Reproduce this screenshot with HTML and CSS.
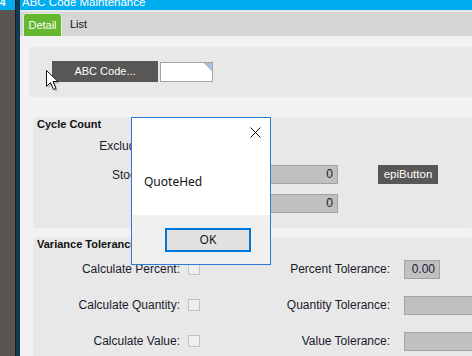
FILE: index.html
```html
<!DOCTYPE html>
<html lang="en">
<head>
    <meta charset="UTF-8">
    <title>ABC Code Maintenance</title>
    <link rel="stylesheet" href="styles.css">
</head>
<body>
    <div class="desk">
        <div class="side">
            <div class="side-top">4</div>
        </div>
        <div class="edge"></div>
        <div class="window">
            <div class="titlebar"><span class="title">ABC Code Maintenance</span></div>
            <div class="tabs">
                <div class="tab active">Detail</div>
                <div class="tab">List</div>
            </div>
            <div class="content">
                <div class="panel key-panel">
                    <div class="epi-btn key-btn">ABC Code...</div>
                    <div class="key-input"></div>
                </div>

                <div class="panel group cycle">
                    <div class="group-title">Cycle Count</div>
                    <div class="row">
                        <span class="lbl">Exclude Inactives:</span>
                        <span class="check"></span>
                    </div>
                    <div class="row">
                        <span class="lbl">Stock Turnover:</span>
                        <span class="field wide">0</span>
                        <div class="epi-btn side-btn">epiButton</div>
                    </div>
                    <div class="row">
                        <span class="lbl"></span>
                        <span class="field wide">0</span>
                    </div>
                </div>

                <div class="panel group variance">
                    <div class="group-title">Variance Tolerance</div>
                    <div class="row">
                        <span class="lbl">Calculate Percent:</span>
                        <span class="check"></span>
                        <span class="lbl2">Percent Tolerance:</span>
                        <span class="field small">0.00</span>
                    </div>
                    <div class="row">
                        <span class="lbl">Calculate Quantity:</span>
                        <span class="check"></span>
                        <span class="lbl2">Quantity Tolerance:</span>
                        <span class="field long"></span>
                    </div>
                    <div class="row">
                        <span class="lbl">Calculate Value:</span>
                        <span class="check"></span>
                        <span class="lbl2">Value Tolerance:</span>
                        <span class="field long"></span>
                    </div>
                </div>
            </div>
        </div>
    </div>

    <!-- mouse pointer over the key button -->
    <svg class="cursor" width="14" height="22" viewBox="0 0 14 22">
        <path d="M1.5 1.5 L1.5 17.5 L5.5 13.5 L8.5 20.5 L11 19.5 L8 12.5 L13 12.5 Z" fill="#6b6b6b" opacity="0.35" transform="translate(1 1)"/>
        <path d="M0.5 0.5 L0.5 16.5 L4.5 12.5 L7.5 19.5 L10 18.5 L7 11.5 L12 11.5 Z" fill="#fff" stroke="#111" stroke-width="1"/>
    </svg>

    <div class="dialog">
        <div class="dlg-body">
            <svg class="dlg-close" width="11" height="11" viewBox="0 0 11 11">
                <path d="M0.5 0.5 L10.5 10.5 M10.5 0.5 L0.5 10.5" stroke="#111" stroke-width="1"/>
            </svg>
            <span class="dlg-text">QuoteHed</span>
        </div>
        <div class="dlg-footer">
            <div class="ok-btn">OK</div>
        </div>
    </div>
</body>
</html>
```

FILE: styles.css
```css
html, body {
    margin: 0;
    width: 472px;
    height: 356px;
    overflow: hidden;
    font-family: "Liberation Sans", Arial, sans-serif;
    color: #1b1b2b;
}

.desk {
    display: flex;
    height: 356px;
}

.side {
    width: 15px;
    flex-shrink: 0;
    background-color: #585552;
}

.side-top {
    height: 10px;
    background-color: #00adef;
    color: #fff;
    font-size: 10px;
    font-weight: bold;
    line-height: 6px;
    overflow: hidden;
}

.edge {
    width: 4px;
    flex-shrink: 0;
    border-left: 1px solid #1b1b1b;
    background-color: #0f3a54;
}

.window {
    flex: 1;
    display: flex;
    flex-direction: column;
    overflow: hidden;
    background-color: #f2f2f4;
}

.window > * {
    flex-shrink: 0;
}

.titlebar {
    height: 10px;
    background-color: #00adef;
    border-bottom: 2px solid #e9e9ea;
    overflow: hidden;
    padding-left: 2px;
}

.title {
    display: block;
    margin-top: -4px;
    line-height: 12px;
    font-size: 11.5px;
    color: #fff;
}

.tabs {
    height: 23px;
    padding: 1px 0 0 3px;
    background-color: #d6d6d6;
    display: flex;
    align-items: flex-end;
}

.tab {
    height: 23px;
    line-height: 23px;
    font-size: 11px;
    padding: 0 8px;
    color: #111;
}

.tab.active {
    box-sizing: border-box;
    width: 39px;
    padding: 0;
    text-align: center;
    background-color: #64b72e;
    color: #fff;
    border: 1px solid #e3f1d9;
    border-bottom: none;
    border-radius: 3px 3px 0 0;
    line-height: 22px;
}

.content {
    flex: 1;
    padding-top: 11px;
}

.panel {
    background-color: #e8e8e8;
    border-radius: 4px;
}

.key-panel {
    height: 50px;
    margin-left: 9px;
    box-sizing: border-box;
    padding: 14px 0 0 23px;
    display: flex;
    align-items: flex-start;
}

.epi-btn {
    background-color: #595755;
    color: #fff;
    text-align: center;
}

.key-btn {
    width: 106px;
    height: 21px;
    line-height: 21px;
    font-size: 11px;
}

.key-input {
    box-sizing: border-box;
    width: 53px;
    height: 20px;
    margin: 1px 0 0 2px;
    background-color: #fff;
    border: 1px solid #a4a4a4;
    background-image: linear-gradient(225deg, #a9c1df 6px, transparent 6px);
}

.group {
    margin-left: 13px;
}

.cycle {
    margin-top: 20px;
    height: 111px;
}

.variance {
    margin-top: 9px;
    height: 130px;
}

.group-title {
    font-size: 11px;
    font-weight: bold;
    line-height: 14px;
    padding-left: 4px;
    color: #111;
}

.row {
    display: flex;
    align-items: center;
    font-size: 12px;
    white-space: nowrap;
}

.row > * {
    flex-shrink: 0;
}

.cycle .row {
    height: 29px;
}

.cycle .row:first-of-type {
    margin-top: 6px;
}

.cycle .lbl {
    width: 163px;
    margin-right: 4px;
    text-align: right;
}

.variance .row {
    height: 36px;
}

.variance .row:first-of-type {
    margin-top: 1px;
}

.variance .lbl {
    width: 147px;
    margin-right: 8px;
    text-align: right;
}

.lbl2 {
    width: 190px;
    margin-right: 14px;
    text-align: right;
}

.check {
    box-sizing: border-box;
    width: 12px;
    height: 12px;
    background-color: #efefef;
    border: 1px solid #c3c3c3;
}

.field {
    box-sizing: border-box;
    height: 19px;
    line-height: 17px;
    padding-right: 4px;
    text-align: right;
    background-color: #c0c0c0;
    border: 1px solid #a2a2a2;
    color: #1a1a1a;
}

.field.wide {
    width: 138px;
}

.field.small {
    width: 36px;
    color: #1b1b3a;
}

.field.long {
    width: 80px;
}

.side-btn {
    width: 60px;
    height: 19px;
    line-height: 19px;
    margin-left: 40px;
    font-size: 11.5px;
}

.cursor {
    position: absolute;
    left: 46px;
    top: 70px;
}

/* message box on top of the form */
.dialog {
    position: absolute;
    left: 131px;
    top: 117px;
    width: 138px;
    border: 1px solid #2a7bd4;
    background-color: #f0f0f0;
    font-family: "Noto Sans", "Open Sans", sans-serif;
    font-size: 12px;
    color: #111;
}

.dlg-body {
    position: relative;
    height: 97px;
    box-sizing: border-box;
    padding: 56px 0 0 12px;
    background-color: #fff;
    line-height: 16px;
}

.dlg-close {
    position: absolute;
    top: 9px;
    right: 9px;
}

.dlg-footer {
    height: 49px;
    box-sizing: border-box;
    padding: 13px 19px 0 0;
    display: flex;
    justify-content: flex-end;
    align-items: flex-start;
}

.ok-btn {
    box-sizing: border-box;
    width: 86px;
    height: 24px;
    line-height: 20px;
    text-align: center;
    background-color: #e1e1e1;
    border: 2px solid #0078d7;
}
```
